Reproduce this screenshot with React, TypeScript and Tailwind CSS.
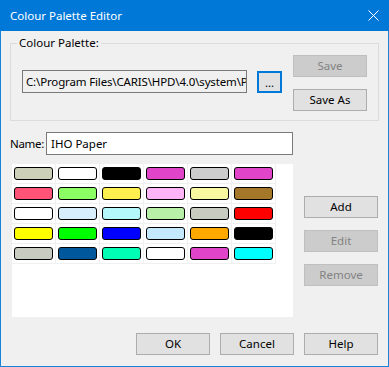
import React from "react";

const rows: string[][] = [
  ["#cdd0b9", "#ffffff", "#000000", "#e044c8", "#cccccc", "#e044c8"],
  ["#ff5478", "#8cff64", "#fff050", "#ffb4f8", "#f8f8a0", "#a47828"],
  ["#ffffff", "#d8eefc", "#b4f8fc", "#b8f0a8", "#c8ccc0", "#ff0000"],
  ["#ffff00", "#00ff00", "#0000ff", "#c4e8fc", "#ffa800", "#000000"],
  ["#c8ccc0", "#00579c", "#00ffb4", "#ffffff", "#e044c8", "#00ffff"],
];

function Btn({
  children,
  disabled,
  className = "",
}: {
  children: React.ReactNode;
  disabled?: boolean;
  className?: string;
}) {
  return (
    <div
      className={
        "w-[74px] h-[22px] flex items-center justify-center border text-[11.5px] leading-none " +
        (disabled
          ? "bg-[#cccccc] border-[#bfbfbf] text-[#838383] "
          : "bg-[#e1e1e1] border-[#adadad] text-black ") +
        className
      }
    >
      {children}
    </div>
  );
}

export default function App() {
  return (
    <div
      className="w-[389px] h-[367px] flex flex-col border-x border-b border-[#1883d7] bg-[#f0f0f0] text-black text-[11.5px]"
      style={{ fontFamily: '"Noto Sans", "Liberation Sans", sans-serif' }}
    >
      {/* Title bar */}
      <div className="h-[31px] shrink-0 bg-[#0078d7] flex items-center justify-between pl-[9px] pr-[9px] text-white text-[11.5px] -mx-px">
        <span className="ml-px">Colour Palette Editor</span>
        <svg width="11" height="11" viewBox="0 0 11 11" className="mr-px">
          <path d="M0.5 0.5 L10.5 10.5 M10.5 0.5 L0.5 10.5" stroke="#ffffff" strokeWidth="1" fill="none" />
        </svg>
      </div>

      <div className="flex flex-col flex-1 pl-[9px] pr-[10px]">
        {/* Group box */}
        <div className="relative mt-[12px] w-[369px] h-[78px] border border-[#dcdcdc] flex pl-[11px] pt-[11px]">
          <span className="absolute left-[6px] -top-[8px] px-[2px] bg-[#f0f0f0] leading-[14px]">
            Colour Palette:
          </span>
          <div className="mt-[15px] w-[225px] h-[23px] border border-[#7a7a7a] bg-[#f0f0f0] overflow-hidden whitespace-nowrap leading-[21px] pl-[3px] tracking-[-0.15px]">
            C:\Program Files\CARIS\HPD\4.0\system\PCE
          </div>
          <div className="mt-[16px] ml-[10px] w-[25px] h-[22px] border-2 border-[#0078d7] bg-[#e1e1e1] flex items-end justify-center leading-[16px]">
            ...
          </div>
          <div className="ml-[11px] flex flex-col gap-[12px]">
            <Btn disabled>Save</Btn>
            <Btn>Save As</Btn>
          </div>
        </div>

        {/* Name row */}
        <div className="mt-[11px] w-[283px] flex items-center">
          <span className="shrink-0 mr-[2px] tracking-[-0.3px] whitespace-nowrap">Name:</span>
          <div className="flex-1 h-[23px] border border-[#7a7a7a] bg-white leading-[21px] pl-[4px]">
            IHO Paper
          </div>
        </div>

        {/* Grid + side buttons */}
        <div className="mt-[9px] flex">
          <div className="ml-[2px] w-[281px] h-[153px] bg-white">
            <div className="flex flex-col">
              {rows.map((r, i) => (
                <div key={i} className="flex">
                  {r.map((c, j) => (
                    <div
                      key={j}
                      className="w-[44px] h-[20px] border-r border-b border-[#f0f0f0] pl-[2px] pt-[3px]"
                    >
                      <div
                        className="w-[39px] h-[13px] border border-black rounded-[3px]"
                        style={{ backgroundColor: c }}
                      />
                    </div>
                  ))}
                </div>
              ))}
            </div>
          </div>
          <div className="ml-[11px] mt-[32px] flex flex-col gap-[12px]">
            <Btn>Add</Btn>
            <Btn disabled>Edit</Btn>
            <Btn disabled className="h-[21px]">Remove</Btn>
          </div>
        </div>

        {/* Bottom buttons */}
        <div className="mt-[16px] flex justify-end gap-[10px]">
          <Btn className="h-[21px]">OK</Btn>
          <Btn className="h-[21px]">Cancel</Btn>
          <Btn className="h-[21px]">Help</Btn>
        </div>
      </div>
    </div>
  );
}
